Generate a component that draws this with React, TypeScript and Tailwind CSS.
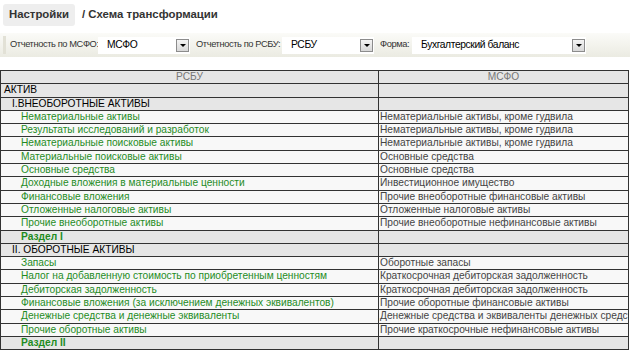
import React from 'react';

type Row = { kind: 'top' | 'section' | 'item' | 'total'; left: string; right?: string };

const rows: Row[] = [
  { kind: 'top', left: 'АКТИВ' },
  { kind: 'section', left: 'I.ВНЕОБОРОТНЫЕ АКТИВЫ' },
  { kind: 'item', left: 'Нематериальные активы', right: 'Нематериальные активы, кроме гудвила' },
  { kind: 'item', left: 'Результаты исследований и разработок', right: 'Нематериальные активы, кроме гудвила' },
  { kind: 'item', left: 'Нематериальные поисковые активы', right: 'Нематериальные активы, кроме гудвила' },
  { kind: 'item', left: 'Материальные поисковые активы', right: 'Основные средства' },
  { kind: 'item', left: 'Основные средства', right: 'Основные средства' },
  { kind: 'item', left: 'Доходные вложения в материальные ценности', right: 'Инвестиционное имущество' },
  { kind: 'item', left: 'Финансовые вложения', right: 'Прочие внеоборотные финансовые активы' },
  { kind: 'item', left: 'Отложенные налоговые активы', right: 'Отложенные налоговые активы' },
  { kind: 'item', left: 'Прочие внеоборотные активы', right: 'Прочие внеоборотные нефинансовые активы' },
  { kind: 'total', left: 'Раздел I' },
  { kind: 'section', left: 'II. ОБОРОТНЫЕ АКТИВЫ' },
  { kind: 'item', left: 'Запасы', right: 'Оборотные запасы' },
  { kind: 'item', left: 'Налог на добавленную стоимость по приобретенным ценностям', right: 'Краткосрочная дебиторская задолженность' },
  { kind: 'item', left: 'Дебиторская задолженность', right: 'Краткосрочная дебиторская задолженность' },
  { kind: 'item', left: 'Финансовые вложения (за исключением денежных эквивалентов)', right: 'Прочие оборотные финансовые активы' },
  { kind: 'item', left: 'Денежные средства и денежные эквиваленты', right: 'Денежные средства и эквиваленты денежных средств' },
  { kind: 'item', left: 'Прочие оборотные активы', right: 'Прочие краткосрочные нефинансовые активы' },
  { kind: 'total', left: 'Раздел II' },
];

function Select({ value, width }: { value: string; width: string }) {
  return (
    <div className={`flex items-center h-[17px] bg-white shrink-0 ${width}`}>
      <span className="flex-1 pl-[9px] text-[10.3px] text-black whitespace-nowrap">{value}</span>
      <span className="w-[13px] h-[13px] mr-[1px] border border-[#8c8c8c] bg-gradient-to-b from-[#f4f4f4] to-[#d8d8d8] flex items-center justify-center">
        <span className="w-0 h-0 border-l-[3px] border-r-[3px] border-t-[3px] border-l-transparent border-r-transparent border-t-black" />
      </span>
    </div>
  );
}

export default function App() {
  return (
    <div className="w-[630px] h-[350px] overflow-hidden bg-white" style={{ fontFamily: '"Liberation Sans", Arial, sans-serif' }}>
      {/* title */}
      <div className="flex items-center h-[28px] pt-[1px]">
        <div className="ml-[3px] h-[22px] w-[72px] rounded-[3px] bg-[#eeeeee] flex items-center justify-center text-[11.4px] font-bold text-[#333]">
          Настройки
        </div>
        <div className="ml-[7px] text-[11.4px] font-bold text-[#333]">/ Схема трансформации</div>
      </div>

      {/* toolbar */}
      <div className="mt-[5px] h-[24px] flex items-center bg-gradient-to-b from-[#fbfbf8] to-[#ebebe2] text-[9.3px] tracking-[-0.4px] text-[#333] whitespace-nowrap">
        <div className="ml-[3px] w-[3px] h-[18px] bg-[#e2e1d6] shrink-0" />
        <span className="ml-[4px] w-[88px] shrink-0">Отчетность по МСФО:</span>
        <Select value="МСФО" width="w-[92px]" />
        <span className="ml-[6px] w-[86px] shrink-0">Отчетность по РСБУ:</span>
        <Select value="РСБУ" width="w-[92px]" />
        <span className="ml-[6px] w-[32px] shrink-0">Форма:</span>
        <Select value="Бухгалтерский баланс" width="w-[174px]" />
      </div>

      {/* table */}
      <div className="mt-[13px] w-[629px] border-t border-l border-r border-[#333] text-[10.2px]">
        <div className="flex h-[13.3px] border-b border-[#333] bg-[#e6e6e6] text-[#777] leading-[12px]">
          <div className="w-[378px] border-r border-[#333] text-center">РСБУ</div>
          <div className="flex-1 text-center">МСФО</div>
        </div>
        {rows.map((r, i) => {
          const gray = r.kind !== 'item';
          return (
            <div
              key={i}
              className={`flex h-[13.3px] border-b border-[#333] leading-[12px] ${gray ? 'bg-[#e6e6e6]' : 'bg-[#f8f8f8]'}`}
            >
              <div
                className={`w-[378px] shrink-0 border-r border-[#333] whitespace-nowrap overflow-hidden ${
                  r.kind === 'top'
                    ? 'pl-[3px] text-black'
                    : r.kind === 'section'
                    ? 'pl-[11px] text-black'
                    : r.kind === 'total'
                    ? 'pl-[20px] font-bold text-[#1f8c1f]'
                    : 'pl-[20px] text-[#1f8c1f]'
                }`}
              >
                {r.left}
              </div>
              <div className="flex-1 pl-[1px] whitespace-nowrap overflow-hidden text-[#444]">{r.right}</div>
            </div>
          );
        })}
      </div>
    </div>
  );
}
